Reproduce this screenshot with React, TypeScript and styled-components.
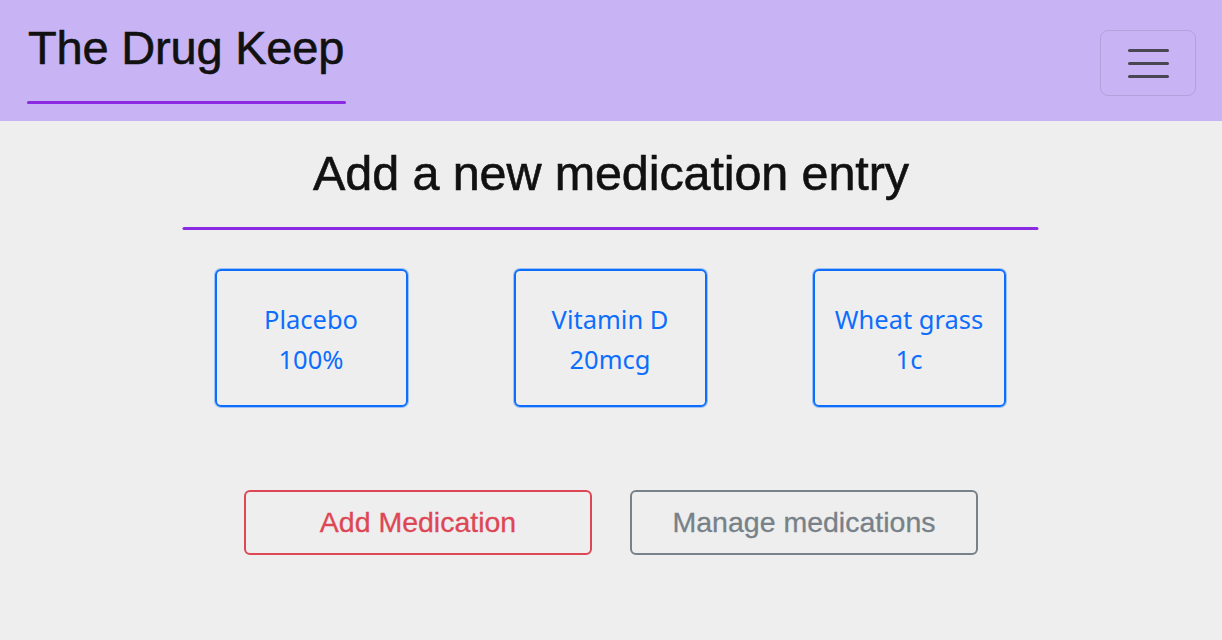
import React from "react";
import styled, { createGlobalStyle } from "styled-components";

const Global = createGlobalStyle`
  html, body { margin: 0; padding: 0; background: #eeeeee; }
  body { font-family: "Liberation Sans", Arial, sans-serif; }
`;

const Header = styled.header`
  height: 121px;
  background: #c8b4f4;
  display: flex;
  justify-content: space-between;
  align-items: flex-start;
  padding: 0 26px 0 27px;
  box-sizing: border-box;
`;

const Brand = styled.div`
  display: flex;
  flex-direction: column;
  padding-top: 22px;
`;

const BrandText = styled.div`
  font-size: 47px;
  line-height: 52px;
  color: #111;
  padding-left: 1px;
  letter-spacing: -0.2px;
  -webkit-text-stroke: 0.6px #111;
`;

const Underline = styled.div<{ $w: number }>`
  width: ${(p) => p.$w}px;
  height: 3px;
  background: #8a2be2;
  border-radius: 2px;
`;

const BrandLine = styled(Underline)`
  margin-top: 27px;
`;

const Toggler = styled.button`
  margin-top: 30px;
  width: 96px;
  height: 66px;
  border: 1.5px solid rgba(0, 0, 0, 0.1);
  border-radius: 8px;
  background: transparent;
  display: flex;
  flex-direction: column;
  align-items: center;
  justify-content: center;
  gap: 10px;
  padding: 0;
`;

const Bar = styled.span`
  display: block;
  width: 41px;
  height: 3px;
  background: #4a4652;
  border-radius: 2px;
`;

const Main = styled.main`
  display: flex;
  flex-direction: column;
  align-items: center;
`;

const Heading = styled.h1`
  margin: 0;
  padding-top: 24px;
  font-weight: normal;
  font-size: 48.5px;
  line-height: 56px;
  color: #111;
  letter-spacing: -0.1px;
  -webkit-text-stroke: 0.6px #111;
`;

const HeadLine = styled(Underline)`
  margin-top: 26px;
  transform: translateX(-0.5px);
`;

const Cards = styled.div`
  display: flex;
  gap: 106px;
  margin-top: 39px;
  transform: translateX(-1px);
`;

const Card = styled.div`
  width: 193px;
  height: 138px;
  box-sizing: border-box;
  border: 2px solid #0d6efd;
  box-shadow: 0 0 0 1px rgba(13, 110, 253, 0.35);
  border-radius: 6px;
  display: flex;
  flex-direction: column;
  align-items: center;
  justify-content: center;
  font-family: "Noto Sans", "Open Sans", sans-serif;
  font-size: 25.5px;
  line-height: 40px;
  color: #0d6efd;
  padding-top: 2px;
`;

const Buttons = styled.div`
  display: flex;
  gap: 38px;
  margin-top: 83px;
`;

const Btn = styled.button<{ $c: string }>`
  width: 348px;
  height: 65px;
  box-sizing: border-box;
  background: transparent;
  border: 2px solid ${(p) => p.$c};
  border-radius: 6px;
  color: ${(p) => p.$c};
  font-family: "Liberation Sans", Arial, sans-serif;
  font-size: 28.5px;
  -webkit-text-stroke: 0.3px ${(p) => p.$c};
  padding: 0;
  opacity: 0.9;
`;

const meds = [
  { name: "Placebo", dose: "100%" },
  { name: "Vitamin D", dose: "20mcg" },
  { name: "Wheat grass", dose: "1c" },
];

export default function App() {
  return (
    <>
      <Global />
      <Header>
        <Brand>
          <BrandText>The Drug Keep</BrandText>
          <BrandLine $w={319} />
        </Brand>
        <Toggler aria-label="menu">
          <Bar />
          <Bar />
          <Bar />
        </Toggler>
      </Header>
      <Main>
        <Heading>Add a new medication entry</Heading>
        <HeadLine $w={856} />
        <Cards>
          {meds.map((m) => (
            <Card key={m.name}>
              <span>{m.name}</span>
              <span>{m.dose}</span>
            </Card>
          ))}
        </Cards>
        <Buttons>
          <Btn $c="#dc3545">Add Medication</Btn>
          <Btn $c="#6c757d">Manage medications</Btn>
        </Buttons>
      </Main>
    </>
  );
}
